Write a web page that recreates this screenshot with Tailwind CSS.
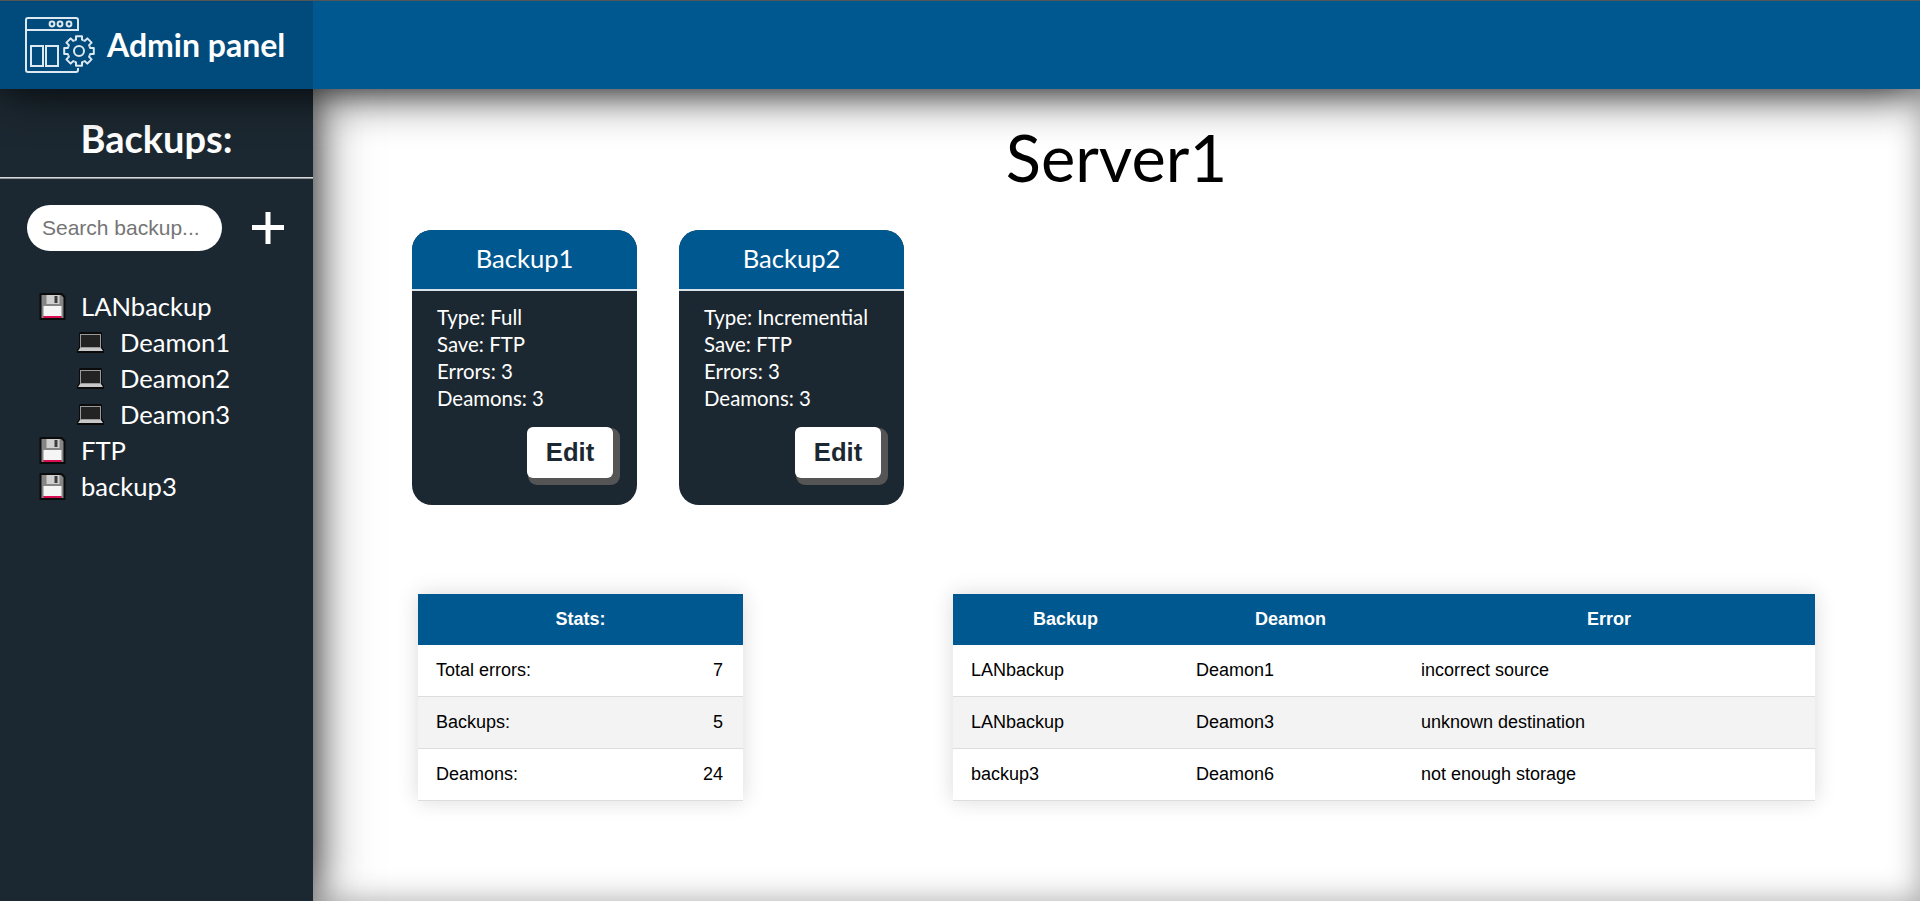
<!DOCTYPE html>
<html lang="en">
<head>
  <meta charset="UTF-8">
  <title>Admin panel</title>
  <script src="https://cdn.jsdelivr.net/npm/@tailwindcss/browser@4"></script>
</head>
<body class="h-[901px] overflow-hidden bg-white font-['Lato',sans-serif]">
  <!-- shared icons -->
  <svg class="hidden">
    <symbol id="floppy" viewBox="0 0 26 27">
      <path d="M1 1h21l3 3v22H1z" fill="#858585" stroke="#0b0b0b" stroke-width="2"/>
      <rect x="7" y="2" width="13" height="9" fill="#cfcfcf"/>
      <rect x="15" y="3" width="3" height="7" fill="#3c3c3c"/>
      <rect x="4" y="13" width="18" height="10" fill="#f5f5f5"/>
      <rect x="4" y="23" width="18" height="2" fill="#d80f55"/>
    </symbol>
    <symbol id="laptop" viewBox="0 0 27 21">
      <path d="M3 0h21l1 1v14l2 3v3H0v-3l2-3V1z" fill="#0b0b0b"/>
      <rect x="3" y="2" width="21" height="14" fill="#9a9a9a"/>
      <rect x="4" y="3" width="19" height="12" fill="#232323"/>
      <path d="M3 16h21l2 3H1z" fill="#c8c8c8"/>
    </symbol>
  </svg>

  <!-- Top bar -->
  <header class="relative z-20 flex h-[89px] border-t border-[#555] bg-[#005890] shadow-[0_0_50px_rgba(0,0,0,0.95)]">
    <div class="flex w-[313px] items-center gap-[12px] bg-[#004b7c] pl-[25px]">
      <svg width="70" height="56" viewBox="0 0 70 56" fill="none" stroke="#dde8f0" stroke-width="2" class="shrink-0">
        <path d="M53 14V3a2 2 0 0 0-2-2H3a2 2 0 0 0-2 2v50a2 2 0 0 0 2 2h48a2 2 0 0 0 2-2v-2"/>
        <path d="M1 13h52"/>
        <circle cx="27" cy="7" r="2.4"/><circle cx="35" cy="7" r="2.4"/><circle cx="44" cy="7" r="2.4"/>
        <rect x="6" y="29" width="12" height="20"/>
        <rect x="21" y="29" width="12" height="20"/>
        <g transform="translate(54 34)" stroke-linejoin="round">
          <circle r="5"/>
          <path d="M-4.4-10.6-3-11.3-3-14.8H3L3-11.3 4.4-10.6"/>
          <path transform="rotate(45)" d="M-4.4-10.6-3-11.3-3-14.8H3L3-11.3 4.4-10.6"/>
          <path transform="rotate(90)" d="M-4.4-10.6-3-11.3-3-14.8H3L3-11.3 4.4-10.6"/>
          <path transform="rotate(135)" d="M-4.4-10.6-3-11.3-3-14.8H3L3-11.3 4.4-10.6"/>
          <path transform="rotate(180)" d="M-4.4-10.6-3-11.3-3-14.8H3L3-11.3 4.4-10.6"/>
          <path transform="rotate(225)" d="M-4.4-10.6-3-11.3-3-14.8H3L3-11.3 4.4-10.6"/>
          <path transform="rotate(270)" d="M-4.4-10.6-3-11.3-3-14.8H3L3-11.3 4.4-10.6"/>
          <path transform="rotate(315)" d="M-4.4-10.6-3-11.3-3-14.8H3L3-11.3 4.4-10.6"/>
        </g>
      </svg>
      <span class="text-[32px] font-bold leading-none text-white">Admin panel</span>
    </div>
  </header>

  <div class="flex h-[812px]">
    <!-- Sidebar -->
    <aside class="relative z-10 w-[313px] shrink-0 bg-[#1c2831] text-white shadow-[0_0_50px_rgba(0,0,0,0.8)]">
      <h2 class="h-[88px] pt-[24px] text-center text-[38px] font-bold leading-[50px]">Backups:</h2>
      <div class="h-[2px] border-t border-b border-t-[#d8d8d8] border-b-[#8d9499]"></div>
      <div class="mt-[26px] flex items-center pl-[27px]">
        <input type="text" placeholder="Search backup..." class="h-[46px] w-[195px] rounded-full bg-white pl-[15px] font-['Liberation_Sans',sans-serif] text-[21px] text-black outline-none placeholder:text-[#757575]">
        <svg width="32" height="32" viewBox="0 0 32 32" class="ml-[30px]" fill="#fff"><rect x="0" y="13" width="32" height="5"/><rect x="13.5" y="0" width="5" height="32"/></svg>
      </div>
      <ul class="mt-[37px] text-[25.6px] leading-[36px]">
        <li class="flex h-[36px] items-center pl-[39px]"><svg class="mr-[15px] h-[27px] w-[27px]"><use href="#floppy"/></svg>LANbackup</li>
        <li class="flex h-[36px] items-center pl-[77px]"><svg class="mr-[16px] h-[21px] w-[27px]"><use href="#laptop"/></svg>Deamon1</li>
        <li class="flex h-[36px] items-center pl-[77px]"><svg class="mr-[16px] h-[21px] w-[27px]"><use href="#laptop"/></svg>Deamon2</li>
        <li class="flex h-[36px] items-center pl-[77px]"><svg class="mr-[16px] h-[21px] w-[27px]"><use href="#laptop"/></svg>Deamon3</li>
        <li class="flex h-[36px] items-center pl-[39px]"><svg class="mr-[15px] h-[27px] w-[27px]"><use href="#floppy"/></svg>FTP</li>
        <li class="flex h-[36px] items-center pl-[39px]"><svg class="mr-[15px] h-[27px] w-[27px]"><use href="#floppy"/></svg>backup3</li>
      </ul>
    </aside>

    <!-- Main -->
    <main class="flex-1 shadow-[inset_0_0_30px_rgba(0,0,0,0.35)]">
      <h1 class="mt-[30px] text-center text-[65px] leading-[76px] text-black">Server1</h1>

      <div class="ml-[99px] mt-[35px] flex gap-[42px]">
        <div class="h-[275px] w-[225px] overflow-hidden rounded-[20px] bg-[#1c2831] text-white">
          <div class="h-[61px] border-b-2 border-[#d8e2ea] bg-[#005890] text-center text-[25.6px] leading-[57px]">Backup1</div>
          <div class="pl-[25px] pt-[13px] text-[20.4px] leading-[27px]">
            <p>Type: Full</p><p>Save: FTP</p><p>Errors: 3</p><p>Deamons: 3</p>
          </div>
          <div class="mt-[15px] flex justify-end pr-[24px]">
            <button class="h-[51px] w-[86px] rounded-[6px] bg-white font-['Liberation_Sans',sans-serif] text-[25.6px] font-bold text-[#1c2831] shadow-[4px_4px_0_3px_#555]">Edit</button>
          </div>
        </div>
        <div class="h-[275px] w-[225px] overflow-hidden rounded-[20px] bg-[#1c2831] text-white">
          <div class="h-[61px] border-b-2 border-[#d8e2ea] bg-[#005890] text-center text-[25.6px] leading-[57px]">Backup2</div>
          <div class="pl-[25px] pt-[13px] text-[20.4px] leading-[27px]">
            <p>Type: Incremential</p><p>Save: FTP</p><p>Errors: 3</p><p>Deamons: 3</p>
          </div>
          <div class="mt-[15px] flex justify-end pr-[23px]">
            <button class="h-[51px] w-[86px] rounded-[6px] bg-white font-['Liberation_Sans',sans-serif] text-[25.6px] font-bold text-[#1c2831] shadow-[4px_4px_0_3px_#555]">Edit</button>
          </div>
        </div>
      </div>

      <div class="ml-[105px] mt-[89px] flex items-start gap-[210px] font-['Liberation_Sans',sans-serif] text-[18px] text-black">
        <table class="w-[325px] table-fixed border-separate border-spacing-0 shadow-[0_0_20px_rgba(0,0,0,0.15)]">
          <thead>
            <tr class="h-[51px] bg-[#005890] text-white"><th colspan="2" class="font-bold">Stats:</th></tr>
          </thead>
          <tbody>
            <tr class="h-[52px] bg-white"><td class="border-b border-[#ddd] pl-[18px]">Total errors:</td><td class="border-b border-[#ddd] pr-[20px] text-right">7</td></tr>
            <tr class="h-[52px] bg-[#f3f3f3]"><td class="border-b border-[#ddd] pl-[18px]">Backups:</td><td class="border-b border-[#ddd] pr-[20px] text-right">5</td></tr>
            <tr class="h-[52px] bg-white"><td class="border-b border-[#ddd] pl-[18px]">Deamons:</td><td class="border-b border-[#ddd] pr-[20px] text-right">24</td></tr>
          </tbody>
        </table>
        <table class="w-[862px] table-fixed border-separate border-spacing-0 shadow-[0_0_20px_rgba(0,0,0,0.15)]">
          <colgroup><col class="w-[225px]"><col class="w-[225px]"><col></colgroup>
          <thead>
            <tr class="h-[51px] bg-[#005890] text-white"><th class="font-bold">Backup</th><th class="font-bold">Deamon</th><th class="font-bold">Error</th></tr>
          </thead>
          <tbody>
            <tr class="h-[52px] bg-white"><td class="border-b border-[#ddd] pl-[18px]">LANbackup</td><td class="border-b border-[#ddd] pl-[18px]">Deamon1</td><td class="border-b border-[#ddd] pl-[18px]">incorrect source</td></tr>
            <tr class="h-[52px] bg-[#f3f3f3]"><td class="border-b border-[#ddd] pl-[18px]">LANbackup</td><td class="border-b border-[#ddd] pl-[18px]">Deamon3</td><td class="border-b border-[#ddd] pl-[18px]">unknown destination</td></tr>
            <tr class="h-[52px] bg-white"><td class="border-b border-[#ddd] pl-[18px]">backup3</td><td class="border-b border-[#ddd] pl-[18px]">Deamon6</td><td class="border-b border-[#ddd] pl-[18px]">not enough storage</td></tr>
          </tbody>
        </table>
      </div>
    </main>
  </div>
</body>
</html>
